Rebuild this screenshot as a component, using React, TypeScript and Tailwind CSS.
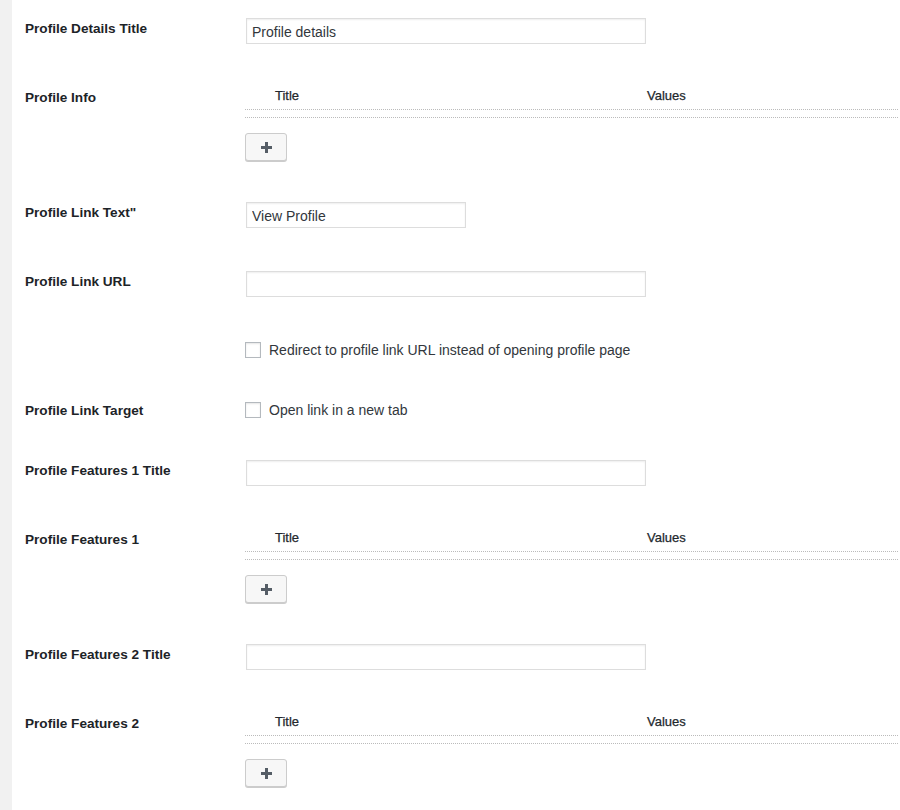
import React from 'react';

const font = { fontFamily: '"Liberation Sans", Arial, sans-serif' };

function Label({ text }: { text?: string }) {
  return (
    <div className="w-[220px] shrink-0 pt-[20px] text-[13.6px] leading-[18px] font-bold text-[#1d2327]">
      {text}
    </div>
  );
}

function TextInput({ value = '', wide = true }: { value?: string; wide?: boolean }) {
  return (
    <input
      type="text"
      defaultValue={value}
      className={`${wide ? 'w-[400px]' : 'w-[220px]'} ml-px h-[26px] border border-[#dddddd] bg-white px-[5px] pt-px text-[14px] text-[#32373c] shadow-[inset_0_1px_2px_rgba(0,0,0,0.07)] outline-none`}
    />
  );
}

function InputRow({ label, value, wide }: { label: string; value?: string; wide?: boolean }) {
  return (
    <div className="flex">
      <Label text={label} />
      <div className="flex-1 pt-[18px] pb-[25px]">
        <TextInput value={value} wide={wide} />
      </div>
    </div>
  );
}

function CheckRow({ label, text }: { label?: string; text: string }) {
  return (
    <div className="flex">
      <Label text={label} />
      <div className="flex-1 pt-[20px] pb-[24px]">
        <label className="flex items-center h-4 gap-2 text-[14px] text-[#32373c]">
          <span className="w-4 h-4 border border-[#b4b9be] bg-white shadow-[inset_0_1px_2px_rgba(0,0,0,0.1)]" />
          {text}
        </label>
      </div>
    </div>
  );
}

function RepeaterRow({ label }: { label: string }) {
  return (
    <div className="flex">
      <Label text={label} />
      <div className="flex-1 pt-[18px] pb-[23px]">
        <div className="flex h-[23px] border-b border-dotted border-[#bbbbbb] text-[13px] leading-[18px] text-[#23282d] [-webkit-text-stroke:0.25px_#23282d]">
          <div className="w-[402px] pl-[30px]">Title</div>
          <div>Values</div>
        </div>
        <div className="h-[8px] border-b border-dotted border-[#bbbbbb]" />
        <button className="mt-[15px] w-[42px] h-[28px] rounded-[3px] border border-[#cccccc] bg-[#f7f7f7] shadow-[0_1px_0_#cccccc] flex items-center justify-center">
          <svg width="11" height="11" viewBox="0 0 11 11">
            <rect x="4" y="0" width="3" height="11" fill="#555d66" />
            <rect x="0" y="4" width="11" height="3" fill="#555d66" />
          </svg>
        </button>
      </div>
    </div>
  );
}

export default function App() {
  return (
    <div className="flex min-h-[810px] bg-white" style={font}>
      <div className="w-[12px] shrink-0 bg-[#f1f1f1]" />
      <div className="flex-1 pl-[13px] pr-[2px]">
        <InputRow label="Profile Details Title" value="Profile details" />
        <RepeaterRow label="Profile Info" />
        <InputRow label={'Profile Link Text"'} value="View Profile" wide={false} />
        <InputRow label="Profile Link URL" />
        <CheckRow text="Redirect to profile link URL instead of opening profile page" />
        <CheckRow label="Profile Link Target" text="Open link in a new tab" />
        <InputRow label="Profile Features 1 Title" />
        <RepeaterRow label="Profile Features 1" />
        <InputRow label="Profile Features 2 Title" />
        <RepeaterRow label="Profile Features 2" />
      </div>
    </div>
  );
}
